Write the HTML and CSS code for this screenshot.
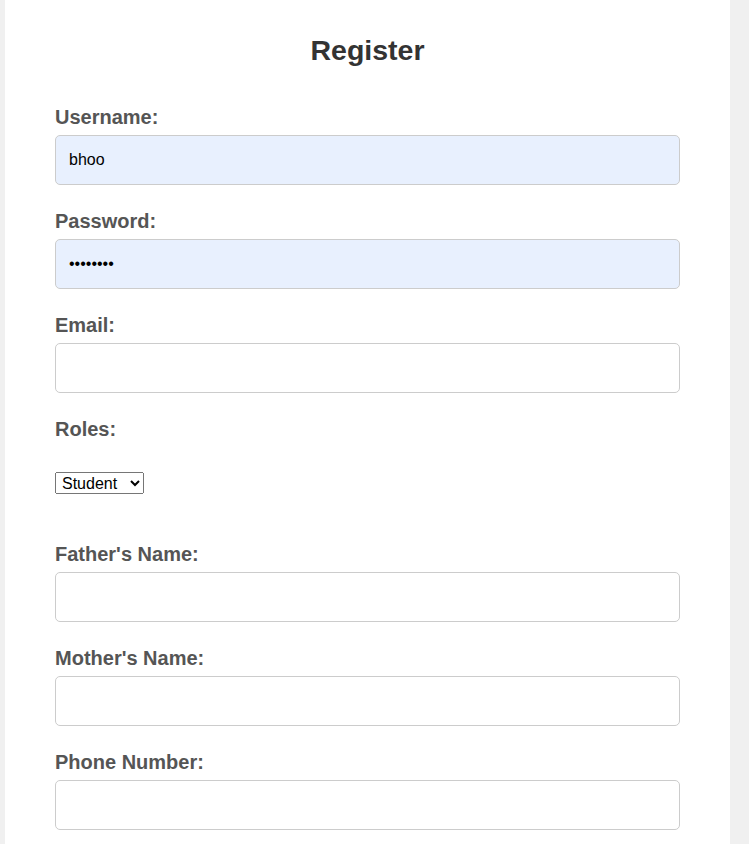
FILE: index.html
```html
<!DOCTYPE html>
<html lang="en">
<head>
<meta charset="utf-8">
<title>Register</title>
<link rel="stylesheet" href="styles.css">
</head>
<body>
<div class="card">
  <h2 class="title">Register</h2>
  <form class="form">
    <div class="group">
      <label class="label" for="username">Username:</label>
      <input class="field filled" id="username" type="text" value="bhoo">
    </div>
    <div class="group">
      <label class="label" for="password">Password:</label>
      <input class="field filled" id="password" type="password" value="bhoo1234">
    </div>
    <div class="group">
      <label class="label" for="email">Email:</label>
      <input class="field" id="email" type="email">
    </div>
    <div class="group">
      <label class="label" for="roles">Roles:</label>
      <select class="select" id="roles">
        <option>Student</option>
        <option>Teacher</option>
      </select>
    </div>
    <div class="group">
      <label class="label" for="father">Father's Name:</label>
      <input class="field" id="father" type="text">
    </div>
    <div class="group">
      <label class="label" for="mother">Mother's Name:</label>
      <input class="field" id="mother" type="text">
    </div>
    <div class="group">
      <label class="label" for="phone">Phone Number:</label>
      <input class="field" id="phone" type="text">
    </div>
  </form>
</div>
</body>
</html>
```

FILE: styles.css
```css
html, body {
  margin: 0;
  padding: 0;
}

body {
  background: #f0f0f0;
  font-family: "Liberation Sans", Arial, sans-serif;
}

.card {
  background: #ffffff;
  margin: 0 19px 0 5px;
  padding: 34px 50px 40px;
  min-height: 900px;
}

.title {
  margin: 0 0 40px;
  font-size: 28.5px;
  line-height: 32px;
  font-weight: bold;
  color: #333333;
  text-align: center;
}

.form {
  display: flex;
  flex-direction: column;
  gap: 25px;
}

.group {
  display: flex;
  flex-direction: column;
  align-items: flex-start;
}

.label {
  display: block;
  font-size: 20px;
  line-height: 22px;
  font-weight: bold;
  color: #555555;
  margin-bottom: 7px;
}

.field {
  box-sizing: border-box;
  width: 100%;
  height: 50px;
  padding: 15px 13px;
  border: 1px solid #cccccc;
  border-radius: 5px;
  background: #ffffff;
  font-family: "Liberation Sans", Arial, sans-serif;
  font-size: 16px;
  color: #000000;
  outline: none;
}

.field.filled {
  background: #e8f0fe;
}

.select {
  box-sizing: border-box;
  width: 89px;
  height: 22px;
  margin: 25px 0 24px;
  padding: 0 2px;
  font-family: "Liberation Sans", Arial, sans-serif;
  font-size: 16px;
  color: #000000;
}
```
